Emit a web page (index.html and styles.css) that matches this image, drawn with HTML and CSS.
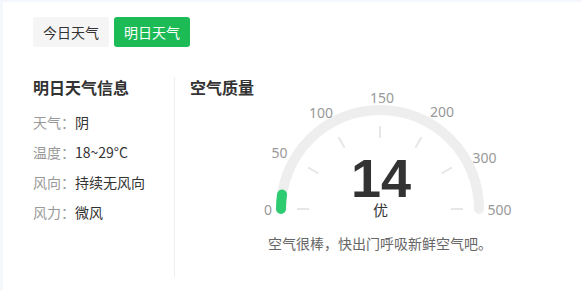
FILE: index.html
```html
<!DOCTYPE html>
<html>
<head>
    <title>明日天气</title>
    <link rel="stylesheet" href="styles.css">
</head>
<body>
    <div class="page">
        <div class="card">
            <div class="tabs">
                <div class="tab">今日天气</div>
                <div class="tab active">明日天气</div>
            </div>

            <div class="content">
                <div class="info">
                    <div class="section-title">明日天气信息</div>
                    <div class="info-list">
                        <div class="info-row"><span class="label">天气：</span><span class="value">阴</span></div>
                        <div class="info-row"><span class="label">温度：</span><span class="value">18~29°C</span></div>
                        <div class="info-row"><span class="label">风向：</span><span class="value">持续无风向</span></div>
                        <div class="info-row"><span class="label">风力：</span><span class="value">微风</span></div>
                    </div>
                </div>

                <div class="aqi">
                    <div class="section-title">空气质量</div>
                    <div class="gauge">
                        <svg class="gauge-svg" width="260" height="135" viewBox="0 0 260 135">
                            <!-- track -->
                            <path d="M31 122 A99 99 0 0 1 229 122" fill="none" stroke="#eeeeee" stroke-width="10" stroke-linecap="round"/>
                            <!-- value 14 of first segment (0-50 = 30deg) -->
                            <path d="M31 122 A99 99 0 0 1 32.06 107.54" fill="none" stroke="#2ecc71" stroke-width="10" stroke-linecap="round"/>
                            <!-- ticks -->
                            <g stroke="#e6e6e6" stroke-width="2">
                                <line x1="47" y1="122" x2="59" y2="122"/>
                                <line x1="58.12" y1="80.5" x2="68.51" y2="86.5"/>
                                <line x1="88.5" y1="50.12" x2="94.5" y2="60.51"/>
                                <line x1="130" y1="39" x2="130" y2="51"/>
                                <line x1="171.5" y1="50.12" x2="165.5" y2="60.51"/>
                                <line x1="201.88" y1="80.5" x2="191.49" y2="86.5"/>
                                <line x1="213" y1="122" x2="201" y2="122"/>
                            </g>
                            <g class="scale">
                                <text x="18" y="122">0</text>
                                <text x="29.5" y="65">50</text>
                                <text x="71" y="25">100</text>
                                <text x="132" y="10.5">150</text>
                                <text x="192" y="24">200</text>
                                <text x="234.5" y="70.5">300</text>
                                <text x="249.5" y="122">500</text>
                            </g>
                            <text class="aqi-value" x="131" y="110">14</text>
                            <text class="aqi-level" x="130.5" y="122">优</text>
                        </svg>
                        <div class="aqi-desc">空气很棒，快出门呼吸新鲜空气吧。</div>
                    </div>
                </div>
            </div>
        </div>
    </div>
</body>
</html>
```

FILE: styles.css
```css
body {
    margin: 0;
    font-family: "Noto Sans CJK SC", "Noto Sans", sans-serif;
    color: #333;
    background-color: #f4f7fb;
}
.page {
    padding: 2px 0 0 3px;
}
.card {
    box-sizing: border-box;
    background: #fff;
    padding: 15px 11px 0 30px;
    min-height: 288px;
}
.tabs {
    display: flex;
    gap: 5px;
}
.tab {
    height: 30px;
    line-height: 30px;
    padding: 0 10px;
    font-size: 14px;
    background: #f5f5f5;
    color: #333;
    border-radius: 3px;
}
.tab.active {
    background: #1dbb56;
    color: #fff;
}
.content {
    display: flex;
    margin-top: 30px;
    min-height: 200px;
}
.info {
    width: 141px;
    border-right: 1px solid #eeeeee;
}
.section-title {
    font-size: 16px;
    font-weight: bold;
    line-height: 20px;
    color: #333;
}
.info-list {
    margin-top: 10px;
}
.info-row {
    font-size: 14px;
    line-height: 30px;
}
.label {
    color: #999;
}
.value {
    color: #333;
}
.aqi {
    width: 380px;
    padding-left: 15px;
}
.gauge {
    display: flex;
    flex-direction: column;
    align-items: center;
    margin-top: -10px;
}
.gauge-svg {
    overflow: visible;
}
.scale text {
    font-family: "Noto Sans", sans-serif;
    font-size: 14px;
    fill: #999;
    text-anchor: middle;
    dominant-baseline: central;
}
.aqi-value {
    font-family: "Liberation Sans", Arial, sans-serif;
    font-size: 54px;
    font-weight: bold;
    fill: #333;
    text-anchor: middle;
}
.aqi-level {
    font-size: 15px;
    fill: #333;
    text-anchor: middle;
    dominant-baseline: central;
}
.aqi-desc {
    margin-top: 10px;
    font-size: 14px;
    line-height: 22px;
    color: #666;
}
```
